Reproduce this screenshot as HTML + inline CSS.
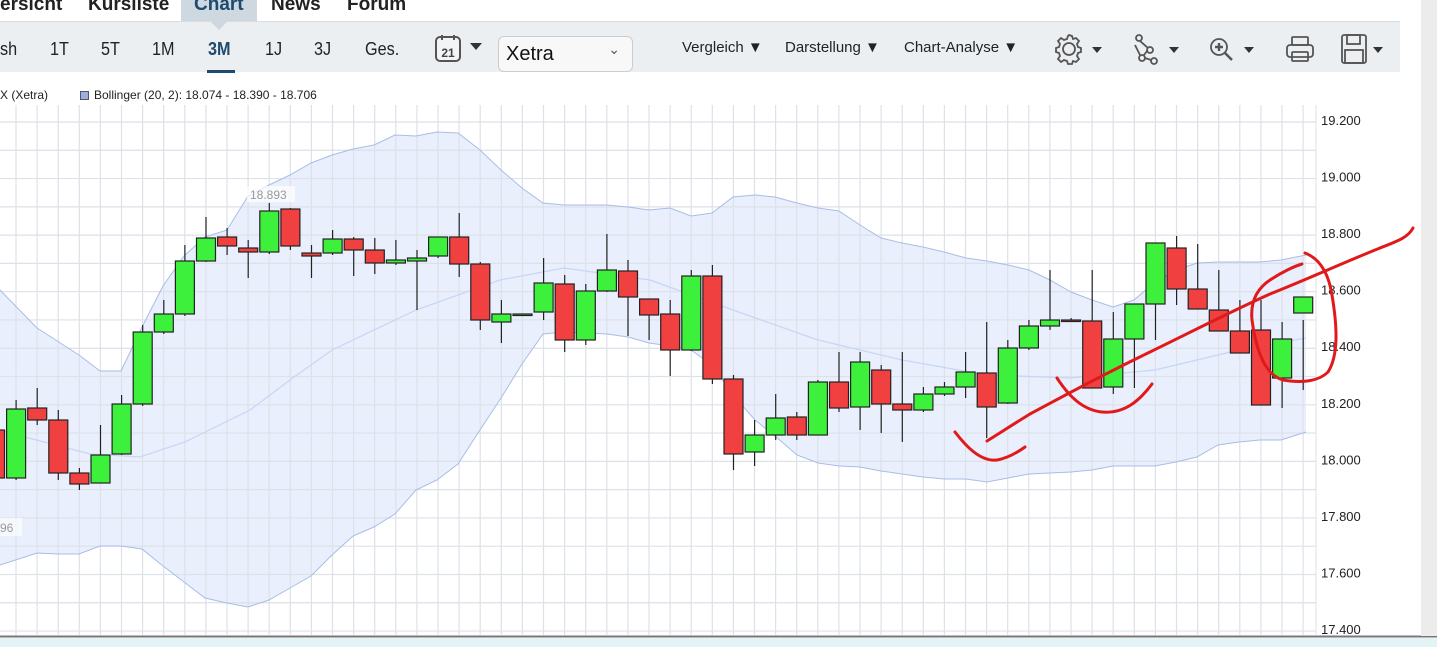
<!DOCTYPE html>
<html><head><meta charset="utf-8"><style>
*{margin:0;padding:0;box-sizing:border-box}
body{width:1437px;height:647px;overflow:hidden;background:#fff;font-family:"Liberation Sans",sans-serif;position:relative}
.tabs{position:absolute;top:0;left:0;height:21px;width:1420px;background:#fff}
.tab{position:absolute;top:-6px;font-size:19px;font-weight:bold;color:#222}
.toolbar{position:absolute;top:21px;left:0;width:1400px;height:51px;background:#eceff2;border-top:1px solid #d8dde2}
.t{position:absolute;top:17px;font-size:18px;color:#222;transform:scaleX(.9);transform-origin:left}
.m{position:absolute;top:17px;font-size:15px;color:#222}
.rs{position:absolute;right:0;top:0;width:16px;height:636px;background:#ececec}
</style></head><body>
<div class="tabs">
<div style="position:absolute;left:181px;top:0;width:76px;height:21px;background:#cdd8e0"></div>
<div class="tab" style="left:0">ersicht</div>
<div class="tab" style="left:88px">Kursliste</div>
<div class="tab" style="left:194px;color:#1d4a6e">Chart</div>
<div class="tab" style="left:271px">News</div>
<div class="tab" style="left:347px">Forum</div>
</div>
<div class="toolbar">
<div style="position:absolute;left:210px;top:-1px;width:0;height:0;border-left:9px solid transparent;border-right:9px solid transparent;border-top:9px solid #cdd8e0"></div>
<div class="t" style="left:0">sh</div>
<div class="t" style="left:50px">1T</div>
<div class="t" style="left:101px">5T</div>
<div class="t" style="left:152px">1M</div>
<div class="t" style="left:208px;color:#1d4a6e;font-weight:bold">3M</div>
<div style="position:absolute;left:207px;top:48px;width:28px;height:3px;background:#1d4a6e"></div>
<div class="t" style="left:265px">1J</div>
<div class="t" style="left:314px">3J</div>
<div class="t" style="left:365px">Ges.</div>
<svg style="position:absolute;left:434px;top:12px" width="54" height="30"><rect x="2" y="3" width="24" height="24" rx="4" fill="#f4f4f4" stroke="#555" stroke-width="2"/><line x1="8" y1="1" x2="8" y2="6" stroke="#555" stroke-width="2"/><line x1="20" y1="1" x2="20" y2="6" stroke="#555" stroke-width="2"/><text x="14" y="23" font-size="12" font-weight="bold" text-anchor="middle" fill="#444" font-family="Liberation Sans">21</text><path d="M36 9h12l-6 7z" fill="#333"/></svg>
<div style="position:absolute;left:498px;top:14px;width:135px;height:36px;background:#f8f8f8;border:1px solid #ccc;border-radius:6px;font-size:20px;padding:6px 0 0 7px;color:#111">Xetra<span style="position:absolute;right:12px;top:4px;font-size:14px;color:#555">&#8964;</span></div>
<div class="m" style="left:682px">Vergleich &#9660;</div>
<div class="m" style="left:785px">Darstellung &#9660;</div>
<div class="m" style="left:904px">Chart-Analyse &#9660;</div>
<svg style="position:absolute;left:1052px;top:10px" width="350" height="34" fill="none" stroke="#555" stroke-width="1.8">
<path d="M17 3l3 1 1 3 3-1 3 3-2 3 1 3 3 1v4l-3 1-1 3 2 3-3 3-3-1-1 3h-4l-1-3-3-1-3 2-3-3 2-3-1-3-3-1v-4l3-1 1-3-2-3 3-3 3 2 3-1 1-3z"/><circle cx="17" cy="17" r="6"/>
<path d="M40 15h10l-5 6z" fill="#333" stroke="none"/>
<circle cx="87" cy="6" r="3"/><circle cx="98" cy="18" r="3"/><circle cx="90" cy="26" r="3"/><circle cx="102" cy="29" r="3"/><path d="M88 9l8 7M95 19l-3 4M93 26l6 2M83 13l5 10"/>
<path d="M117 15h10l-5 6z" fill="#333" stroke="none"/>
<circle cx="167" cy="15" r="8"/><path d="M163 15h8M167 11v8" stroke-width="2.4"/><path d="M173 21l7 7" stroke-width="2.5"/>
<path d="M192 15h10l-5 6z" fill="#333" stroke="none"/>
<rect x="235" y="13" width="26" height="12" rx="3"/><rect x="240" y="5" width="16" height="8" rx="1"/><rect x="240" y="20" width="16" height="9" rx="1"/>
<rect x="290" y="3" width="24" height="28" rx="2"/><rect x="295" y="3" width="13" height="9"/><rect x="293" y="18" width="18" height="13"/>
<path d="M321 15h10l-5 6z" fill="#333" stroke="none"/>
</svg>
</div>
<div style="position:absolute;left:0;top:88px;font-size:12px;color:#222">X (Xetra)</div>
<div style="position:absolute;left:80px;top:91px;width:9px;height:9px;background:#9cb0e0;border:1px solid #556"></div>
<div style="position:absolute;left:94px;top:88px;font-size:12px;color:#222">Bollinger (20, 2): 18.074 - 18.390 - 18.706</div>
<svg id="c" style="position:absolute;left:0;top:0" width="1437" height="647"></svg>
<div class="rs"></div>
<script>
var s='';
var Y=p=>122+(19.2-p)*282.8;
s+='<rect x="0" y="105" width="1316" height="530" fill="#fff"/>';
var up=[[0,290],[37,328],[79,355],[100,371],[121,371],[142,327],[163,286],[184,256],[205,237],[227,230],[248,196],[269,185],[290,175],[311,163],[332,155],[353,149],[374,145],[395,135],[416,136],[437,132],[458,133],[480,150],[501,170],[522,188],[543,203],[564,205],[607,205],[628,207],[649,210],[670,208],[691,216],[712,213],[733,197],[755,195],[775,197],[797,203],[818,208],[839,211],[860,225],[881,238],[902,243],[923,247],[944,252],[966,258],[987,261],[1008,265],[1029,270],[1050,280],[1071,292],[1092,300],[1113,307],[1134,300],[1155,282],[1176,270],[1197,263],[1218,262],[1239,262],[1260,262],[1281,260],[1306,255]];
var lo=[[0,565],[37,553],[58,554],[79,554],[100,546],[121,546],[142,549],[163,566],[184,582],[205,598],[227,603],[248,607],[269,600],[290,588],[311,576],[332,555],[353,536],[374,527],[395,514],[416,490],[437,480],[458,464],[480,430],[501,398],[522,364],[543,334],[564,332],[607,334],[628,337],[649,343],[670,346],[691,350],[712,365],[733,395],[755,420],[775,436],[797,455],[818,463],[839,466],[860,467],[881,471],[902,474],[923,477],[944,479],[966,479],[987,482],[1008,478],[1029,474],[1071,472],[1092,470],[1113,466],[1134,466],[1155,466],[1176,462],[1197,457],[1218,445],[1239,442],[1260,440],[1281,440],[1306,432]];
var mid=[[0,430],[25,437],[90,454],[140,457],[185,442],[250,410],[290,380],[332,350],[416,310],[500,280],[564,268],[650,280],[733,310],[818,340],[902,360],[987,375],[1071,378],[1155,370],[1239,350],[1306,338]];
var P=a=>a.map(p=>p.join(',')).join(' ');
s+='<polygon points="'+P(up)+' '+P(lo.slice().reverse())+'" fill="#e9effc"/>';
for(var i=0;i<63;i++){var x=16+i*21.1;if(x<1316)s+='<line x1="'+x+'" y1="105" x2="'+x+'" y2="635" stroke="#dde1e8" stroke-width="1.2"/>';}
for(var p=17.4;p<19.25;p+=0.1){var y=Y(p);s+='<line x1="0" y1="'+y+'" x2="1316" y2="'+y+'" stroke="#dde1e8" stroke-width="1.2"/>';}
for(var k=0;k<10;k++){var p=17.4+k*0.2,y=Y(p);s+='<text x="1321" y="'+(y+3)+'" font-size="13" fill="#222" font-family="Liberation Sans">'+p.toFixed(3)+'</text>';}
s+='<line x1="1316" y1="105" x2="1316" y2="635" stroke="#dde1e8"/>';
s+='<polyline points="'+P(up)+'" fill="none" stroke="#a9bde6" stroke-width="1"/>';
s+='<polyline points="'+P(lo)+'" fill="none" stroke="#a9bde6" stroke-width="1"/>';
s+='<polyline points="'+P(mid)+'" fill="none" stroke="#c6d6f5" stroke-width="1.2"/>';
var C=[['r',430,478],['g',409,478],['r',408,420],['r',420,473],['r',473,484],['g',455,483],['g',404,454],['g',332,404],['g',314,332],['g',261,314],['g',238,261],['r',237,246],['r',248,252],['g',211,252],['r',209,246],['r',253,256],['g',239,253],['r',239,250],['r',250,263],['g',260,263],['g',258,261],['g',237,256],['r',237,264],['r',264,320],['g',314,322],['g',314,315],['g',283,312],['r',284,340],['g',291,340],['g',270,291],['r',271,297],['r',299,315],['r',314,350],['g',276,350],['r',276,379],['r',379,454],['g',435,452],['g',418,435],['r',417,435],['g',382,435],['r',382,408],['g',362,407],['r',370,404],['r',404,410],['g',394,410],['g',387,394],['g',372,387],['r',373,407],['g',348,403],['g',326,348],['g',320,326],['r',320,321],['r',321,388],['g',339,387],['g',304,339],['g',243,304],['r',248,289],['r',289,309],['r',310,331],['r',331,353],['r',330,405],['g',339,378],['g',297,313]];
var W=[[400,485],[400,480],[388,425],[410,480],[468,490],[425,483],[395,455],[325,406],[300,334],[245,316],[217,262],[228,255],[240,278],[203,254],[208,250],[245,278],[230,255],[237,276],[238,274],[240,265],[250,310],[237,258],[213,277],[262,330],[300,343],[315,316],[258,320],[275,352],[284,345],[234,292],[260,336],[300,340],[300,376],[270,351],[265,384],[375,470],[420,466],[394,440],[412,440],[380,430],[352,412],[352,430],[365,433],[352,442],[387,412],[382,396],[352,398],[322,438],[340,404],[320,350],[270,330],[318,322],[270,322],[312,394],[336,388],[300,340],[236,305],[244,290],[270,328],[300,333],[300,356],[322,408],[320,390],[270,322]];
C.forEach((c,i)=>{var x=-5+i*21.1,w=W[i]||[c[1]-10,c[2]+10];
s+='<line x1="'+x+'" y1="'+w[0]+'" x2="'+x+'" y2="'+w[1]+'" stroke="#222" stroke-width="1.2"/>';
var h=Math.max(c[2]-c[1],1.5);
s+='<rect x="'+(x-9.5)+'" y="'+c[1]+'" width="19" height="'+h+'" fill="'+(c[0]=='g'?'#3cf03c':'#f04040')+'" stroke="#222" stroke-width="1.2"/>';});
s+='<rect x="247" y="186" width="48" height="16" fill="#fff" opacity=".7"/><text x="250" y="199" font-size="12" fill="#999" font-family="Liberation Sans">18.893</text>';
s+='<rect x="0" y="518" width="22" height="18" fill="#fff" opacity=".6"/><text x="0" y="532" font-size="12" fill="#999" font-family="Liberation Sans">96</text>';
var R='fill="none" stroke="#e01a1a" stroke-width="3" stroke-linecap="round"';
s+='<path d="M955 432C965 445 980 462 997 460C1008 458 1018 452 1025 447" '+R+'/>';
s+='<path d="M987 441C1000 433 1012 425 1030 414C1060 398 1100 376 1150 352C1195 330 1230 312 1270 294C1310 278 1345 262 1380 248C1395 242 1408 238 1413 228" '+R+'/>';
s+='<path d="M1057 378C1068 395 1082 410 1102 412C1125 414 1140 400 1152 384" '+R+'/>';
s+='<path d="M1305 253C1318 258 1328 270 1332 295C1337 325 1339 355 1328 372C1318 382 1300 383 1283 380C1265 375 1256 350 1252 320C1250 300 1258 288 1270 280C1282 272 1295 266 1302 264" '+R+'/>';
s+='<line x1="0" y1="636.5" x2="1437" y2="636.5" stroke="#777" stroke-width="2"/><rect x="0" y="638" width="1437" height="9" fill="#e3f4f6"/>';
document.getElementById('c').innerHTML=s;
</script>
</body></html>
